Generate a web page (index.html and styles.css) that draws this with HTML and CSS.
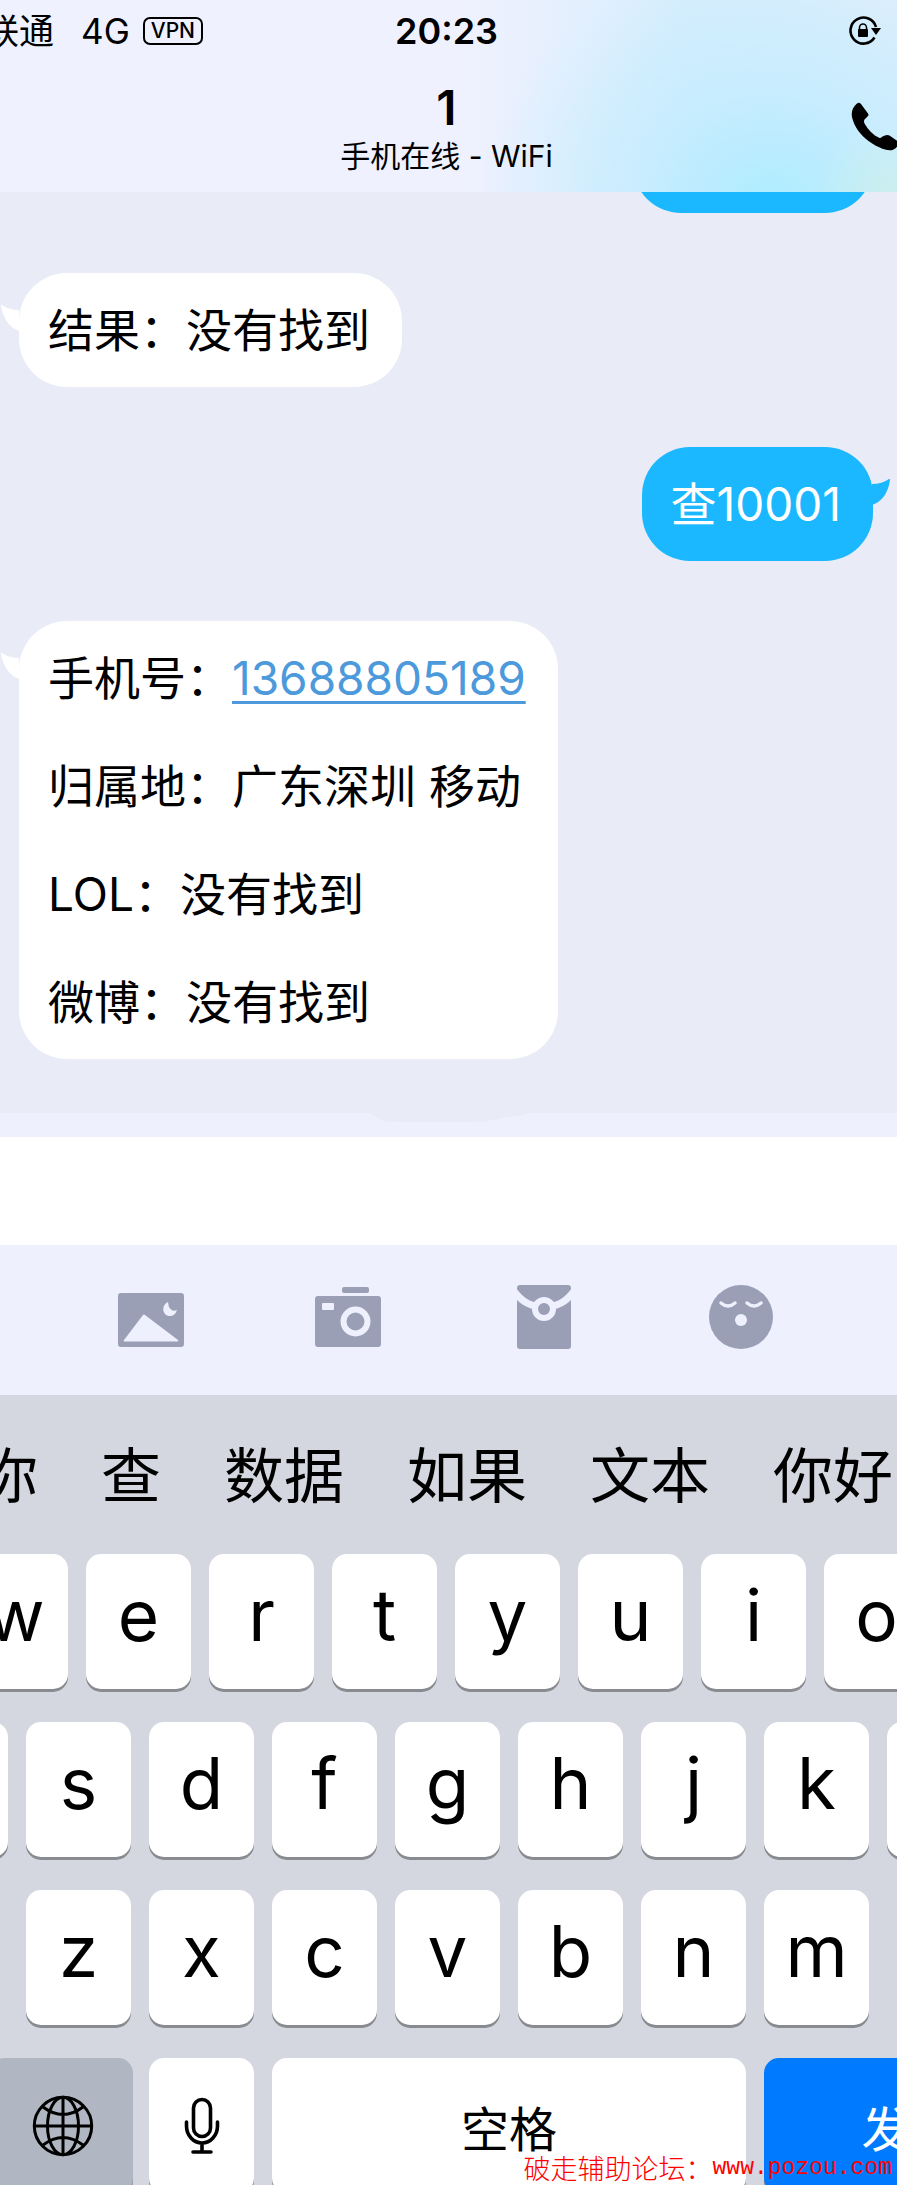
FILE: index.html
```html
<!DOCTYPE html>
<html lang="zh-CN">
<head>
  <meta charset="UTF-8" />
  <meta name="viewport" content="width=device-width, initial-scale=1" />
  <title>1</title>
  <link rel="stylesheet" href="styles.css">
</head>
<body>
  <div class="screen">

    <header class="chat-header">
      <div class="status-bar">
        <div class="carrier">
          <span>联通</span>
          <span class="network">4G</span>
          <span class="vpn">VPN</span>
        </div>
        <time class="clock">20:23</time>
        <svg class="lock-icon" width="34" height="32" viewBox="0 0 34 32">
          <path d="M26.500 22.500A13 13 0 1 1 28 12" fill="none" stroke="#000" stroke-width="2.600" />
          <path d="M23 13h10l-5 7z" />
          <path d="M11.500 15v-2.500a3.500 3.500 0 0 1 7 0V15" fill="none" stroke="#000" stroke-width="1.600" />
          <rect x="10" y="14" width="10" height="8" rx="1" />
        </svg>
      </div>
      <div class="title-bar">
        <div class="title">
          <h1>1</h1>
          <p>手机在线 - WiFi</p>
        </div>
        <button class="call" type="button" aria-label="语音通话">
          <svg width="50" height="50" viewBox="0 0 50 50">
            <path d="M6 1.500Q8 0 10 2L17 11.500Q18 13 17 14L13.500 17.500Q12.500 19 13.500 21.500C17 28 22 33 28.500 36Q30 36 31.500 34.500Q35.500 32 38.500 33.500L47 39.500Q49 41.500 47 43.500C43 49 39 49 34 47.500C17 42 4 29 1 15C0 9 2 5 6 1.500Z" />
          </svg>
        </button>
      </div>
    </header>

    <main class="chat">
      <div class="bubble sent cut"></div>

      <div class="bubble received">
        <svg class="tail" width="19" height="27" viewBox="0 0 19 27"><path d="M1 1Q0 0 2 0Q9 5 19 5V26Q5 21 1 1Z" /></svg>
        <p>结果：没有找到</p>
      </div>

      <div class="bubble sent">
        <svg class="tail" width="19" height="27" viewBox="0 0 19 27"><path d="M18 1Q19 0 17 0Q10 5 0 5V26Q15 21 18 1Z" /></svg>
        <p>查10001</p>
      </div>

      <div class="bubble received">
        <svg class="tail" width="19" height="27" viewBox="0 0 19 27"><path d="M1 1Q0 0 2 0Q9 5 19 5V26Q5 21 1 1Z" /></svg>
        <p>手机号：<a href="tel:13688805189">13688805189</a></p>
        <p>归属地：广东深圳 移动</p>
        <p>LOL：没有找到</p>
        <p>微博：没有找到</p>
      </div>
    </main>

    <div class="input-edge">
      <svg width="160" height="10" viewBox="0 0 160 10"><path d="M0 0H158Q150 4 135 4Q118 9 100 9H25Q8 9 0 0Z" fill="#e9ecf6" /></svg>
    </div>
    <div class="input-blank"></div>

    <nav class="tools">
      <button type="button" aria-label="图片">
        <svg width="66" height="66" viewBox="0 0 66 66">
          <rect y="9" width="66" height="54" rx="3" />
          <path class="hole" d="M25 31Q26 30 27 31L60 56Q61 57.500 59 57.500H7Q5 57.500 6 56Z" />
          <path class="hole" d="M50 18C43 21 44 32 52 32Q57 32 59 26Q51 29 50 18Z" />
        </svg>
      </button>
      <button type="button" aria-label="拍照">
        <svg width="66" height="66" viewBox="0 0 66 66">
          <rect x="27" y="3" width="27" height="6" rx="2" />
          <rect y="12" width="66" height="51" rx="3" />
          <rect class="hole" x="7" y="19" width="12" height="7" rx="1" />
          <circle cx="40.500" cy="37.500" r="12" fill="none" stroke="#eef0fd" stroke-width="6" />
        </svg>
      </button>
      <button type="button" aria-label="红包">
        <svg width="66" height="66" viewBox="0 0 66 66">
          <rect x="6" y="1" width="54" height="64" rx="3" />
          <path d="M3 7Q14 23 33 23Q52 23 63 7" fill="none" stroke="#eef0fd" stroke-width="7" />
          <circle cx="33" cy="25" r="9" stroke="#eef0fd" stroke-width="6" />
        </svg>
      </button>
      <button type="button" aria-label="表情">
        <svg width="66" height="66" viewBox="0 0 66 66">
          <circle cx="33" cy="33" r="32" />
          <path d="M13 19Q20 25 27 19M39 19Q46 25 53 19" fill="none" stroke="#eef0fd" stroke-width="3.500" stroke-linecap="round" />
          <circle class="hole" cx="33" cy="36" r="6" />
        </svg>
      </button>
    </nav>

    <section class="keyboard">
      <div class="candidates">
        <button type="button">你</button>
        <button type="button">查</button>
        <button type="button">数据</button>
        <button type="button">如果</button>
        <button type="button">文本</button>
        <button type="button">你好</button>
      </div>

      <div class="keys top-row">
        <button type="button">w</button>
        <button type="button">e</button>
        <button type="button">r</button>
        <button type="button">t</button>
        <button type="button">y</button>
        <button type="button">u</button>
        <button type="button">i</button>
        <button type="button">o</button>
      </div>
      <div class="keys">
        <button type="button" aria-label="a"></button>
        <button type="button">s</button>
        <button type="button">d</button>
        <button type="button">f</button>
        <button type="button">g</button>
        <button type="button">h</button>
        <button type="button">j</button>
        <button type="button">k</button>
        <button type="button" aria-label="l"></button>
      </div>
      <div class="keys">
        <button type="button">z</button>
        <button type="button">x</button>
        <button type="button">c</button>
        <button type="button">v</button>
        <button type="button">b</button>
        <button type="button">n</button>
        <button type="button">m</button>
      </div>
      <div class="keys bottom-row">
        <button class="globe" type="button" aria-label="切换键盘">
          <svg width="62" height="62" viewBox="0 0 62 62" fill="none" stroke="#000" stroke-width="3">
            <circle cx="31" cy="31" r="28.700" />
            <ellipse cx="31" cy="31" rx="15.500" ry="28.700" />
            <path d="M31 2V60M2 31H60M11 12Q31 27 51 12M11 50Q31 35 51 50" />
          </svg>
        </button>
        <button type="button" aria-label="语音输入">
          <svg width="36" height="58" viewBox="0 0 36 58" fill="none" stroke="#000" stroke-width="3.600" stroke-linecap="round">
            <rect x="9.500" y="2.500" width="17" height="37" rx="8.500" />
            <path d="M2.500 25V29A15.500 17 0 0 0 33.500 29V25M18 46V54M9 55H27" />
          </svg>
        </button>
        <button class="space" type="button">空格</button>
        <button class="send" type="button">发送</button>
      </div>
    </section>

    <p class="watermark">破走辅助论坛：<span>www.pozou.com</span></p>
  </div>
</body>
</html>
```
FILE: styles.css
```css
* {
  box-sizing: border-box;
}

body {
  margin: 0;
  font-family: Inter, "Noto Sans CJK SC", sans-serif;
  color: #000;
}

h1, p {
  margin: 0;
}

button {
  border: none;
  padding: 0;
  background: none;
  font-family: inherit;
  color: inherit;
  cursor: pointer;
}

svg {
  display: block;
}

.screen {
  position: relative;
  height: 100vh;
  overflow: hidden;
  background-color: #fff;
}

/* header */
.chat-header {
  height: 192px;
  overflow: hidden;
  background-color: #eff1fe;
  background-image:
    radial-gradient(circle at 100% 110%, rgba(205, 240, 225, 0.7), transparent 90px),
    radial-gradient(ellipse 290px 250px at 86% 105%, #aeecff, rgba(190, 236, 255, 0.75) 40%, rgba(215, 238, 254, 0)),
    linear-gradient(90deg, rgba(217, 238, 253, 0) 52%, #d9eefd 76%, #dfeefc);
}

.status-bar {
  display: grid;
  grid-template-columns: 1fr auto 1fr;
  align-items: center;
  height: 62px;
  padding-right: 4px;
}

.carrier {
  display: flex;
  align-items: center;
  margin-left: -16px;
  font-size: 35px;
  line-height: 40px;
}

.network {
  margin-left: 27px;
}

.vpn {
  margin-left: 13px;
  padding: 0 6px;
  border: 2px solid #000;
  border-radius: 7px;
  font-size: 21px;
  line-height: 24px;
  font-weight: 500;
}

.clock {
  font-size: 36px;
  line-height: 40px;
  font-weight: 600;
}

.lock-icon {
  justify-self: end;
  margin-right: 11px;
}

.title-bar {
  display: grid;
  grid-template-columns: 1fr auto 1fr;
  padding-right: 4px;
}

.title {
  grid-column: 2;
  padding-top: 10px;
  text-align: center;
}

.title h1 {
  font-size: 48px;
  line-height: 72px;
  font-weight: 600;
}

.title p {
  font-size: 30px;
  line-height: 24px;
}

.call {
  justify-self: end;
  align-self: start;
  margin: 40px -8px 0 0;
}

/* messages */
.chat {
  display: flex;
  flex-direction: column;
  gap: 60px;
  padding: 0 24px 54px 19px;
  background-color: #e9ecf6;
}

.bubble {
  position: relative;
  padding: 30px 32px 30px 29px;
  border-radius: 48px;
  font-size: 46px;
  line-height: 54px;
}

.bubble p + p {
  margin-top: 54px;
}

.bubble a {
  color: #4c99dc;
  text-decoration-thickness: 3px;
  text-underline-offset: 6px;
}

.received {
  align-self: flex-start;
  background-color: #fff;
}

.sent {
  align-self: flex-end;
  background-color: #1bb8ff;
  color: #fff;
}

.cut {
  width: 240px;
  height: 114px;
  margin-top: -93px;
  clip-path: inset(93px 0 0 0);
}

.tail {
  position: absolute;
  top: 32px;
}

.received .tail {
  right: 100%;
  fill: #fff;
}

.sent .tail {
  left: 100%;
  margin-left: -1px;
  fill: #1bb8ff;
}

.input-edge {
  height: 24px;
  padding-left: 371px;
  background-color: #eef0fd;
}

.input-blank {
  height: 108px;
}

/* toolbar */
.tools {
  display: grid;
  grid-template-columns: repeat(4, 1fr);
  height: 150px;
  padding: 0 58px 6px 53px;
  background-color: #eef0fd;
}

.tools button {
  display: flex;
  justify-content: center;
  align-items: center;
}

.tools svg {
  fill: #9a9fb6;
}

.tools .hole {
  fill: #eef0fd;
}

/* keyboard */
.keyboard {
  padding-right: 2px;
  overflow: hidden;
  background-color: #d4d7df;
}

.candidates {
  display: flex;
  gap: 63px;
  height: 159px;
  margin-left: -22px;
}

.candidates button {
  flex: none;
  padding-bottom: 6px;
  font-size: 60px;
}

.keys {
  display: flex;
  justify-content: center;
  gap: 18px;
  margin-bottom: 33px;
}

.keys button {
  display: flex;
  justify-content: center;
  align-items: center;
  flex: none;
  width: 105px;
  height: 135px;
  padding-bottom: 13px;
  border-radius: 15px;
  background-color: #fff;
  box-shadow: 0 3px 0 #898b90;
  font-size: 71px;
  font-weight: 400;
}

.top-row {
  padding-right: 3px;
}

.bottom-row {
  justify-content: flex-start;
  margin-left: -10px;
}

.bottom-row button {
  padding-bottom: 0;
  font-size: 48px;
}

.bottom-row .globe {
  width: 143px;
  padding-left: 2px;
  margin-right: -2px;
  background-color: #b0b6c2;
}

.bottom-row .space {
  flex: 1 0 474px;
}

.bottom-row .send {
  width: 291px;
  margin-right: -158px;
  background-color: #007aff;
  color: #fff;
}

.watermark {
  position: absolute;
  right: 5px;
  bottom: 0;
  display: flex;
  color: #f00;
  font-family: "Noto Sans CJK SC", sans-serif;
  font-size: 27px;
  line-height: 34px;
  font-weight: 300;
}

.watermark span {
  font-family: "Liberation Mono", monospace;
  font-size: 23px;
}
```
